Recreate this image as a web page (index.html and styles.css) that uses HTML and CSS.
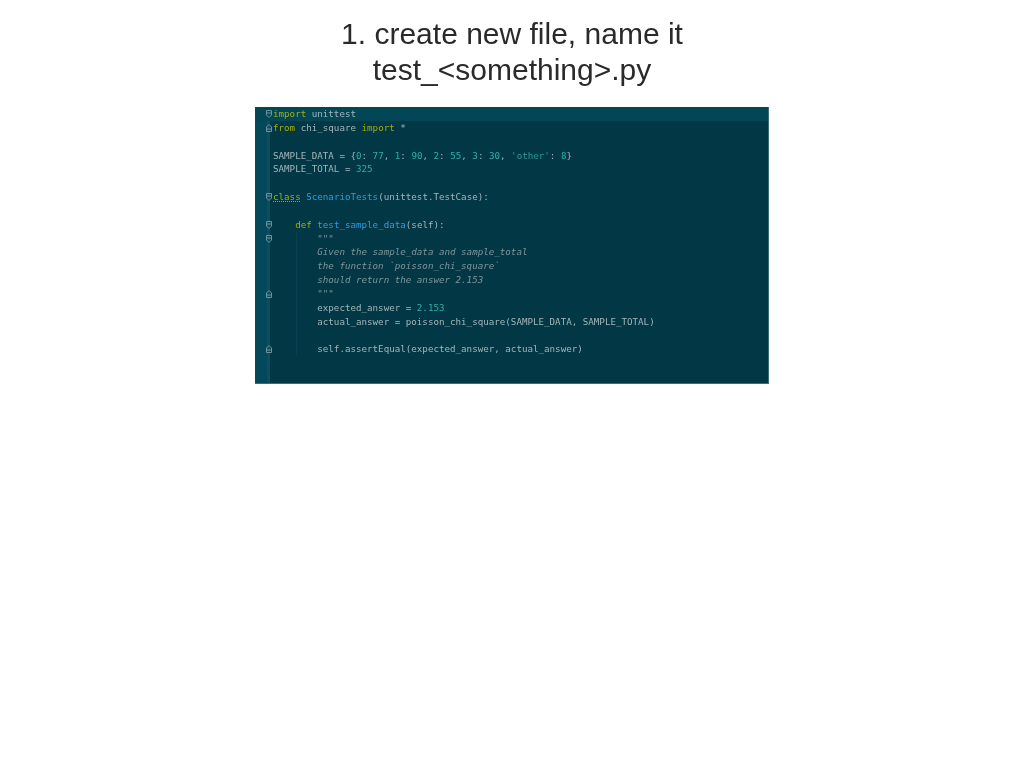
FILE: index.html
```html
<!DOCTYPE html>
<html lang="en">
<head>
<meta charset="utf-8">
<title>create new file</title>
<link rel="stylesheet" href="styles.css">
</head>
<body>
<main class="slide">
  <h1 class="title">1. create new file, name it<br>test_&lt;something&gt;.py</h1>
  <section class="editor">
    <div class="line active"><div class="gutter"><svg class="fold" viewBox="0 0 6 8"><path d="M.5.5h5V5L3 7.500.5 5zM.5 3h5"/></svg></div><code class="code"><span class="kw">import</span> unittest</code></div>
    <div class="line"><div class="gutter"><svg class="fold" viewBox="0 0 6 8"><path d="M.5 7.500h5V3L3 .5.5 3zM.5 5h5"/></svg></div><code class="code"><span class="kw">from</span> chi_square <span class="kw">import</span> *</code></div>
    <div class="line"><div class="gutter"></div><code class="code"></code></div>
    <div class="line"><div class="gutter"></div><code class="code">SAMPLE_DATA = {<span class="num">0</span>: <span class="num">77</span>, <span class="num">1</span>: <span class="num">90</span>, <span class="num">2</span>: <span class="num">55</span>, <span class="num">3</span>: <span class="num">30</span>, <span class="str">'other'</span>: <span class="num">8</span>}</code></div>
    <div class="line"><div class="gutter"></div><code class="code">SAMPLE_TOTAL = <span class="num">325</span></code></div>
    <div class="line"><div class="gutter"></div><code class="code"></code></div>
    <div class="line"><div class="gutter"><svg class="fold" viewBox="0 0 6 8"><path d="M.5.5h5V5L3 7.500.5 5zM.5 3h5"/></svg></div><code class="code"><span class="kw warn">class</span> <span class="name">ScenarioTests</span>(unittest.TestCase):</code></div>
    <div class="line"><div class="gutter"></div><code class="code"></code></div>
    <div class="line"><div class="gutter"><svg class="fold" viewBox="0 0 6 8"><path d="M.5.5h5V5L3 7.500.5 5zM.5 3h5"/></svg></div><code class="code">    <span class="kw">def</span> <span class="name">test_sample_data</span>(self):</code></div>
    <div class="line"><div class="gutter"><svg class="fold" viewBox="0 0 6 8"><path d="M.5.5h5V5L3 7.500.5 5zM.5 3h5"/></svg></div><code class="code">        <span class="doc">"""</span></code></div>
    <div class="line"><div class="gutter"></div><code class="code">        <span class="doc">Given the sample_data and sample_total</span></code></div>
    <div class="line"><div class="gutter"></div><code class="code">        <span class="doc">the function `poisson_chi_square`</span></code></div>
    <div class="line"><div class="gutter"></div><code class="code">        <span class="doc">should return the answer 2.153</span></code></div>
    <div class="line"><div class="gutter"><svg class="fold" viewBox="0 0 6 8"><path d="M.5 7.500h5V3L3 .5.5 3zM.5 5h5"/></svg></div><code class="code">        <span class="doc">"""</span></code></div>
    <div class="line"><div class="gutter"></div><code class="code">        expected_answer = <span class="num">2.153</span></code></div>
    <div class="line"><div class="gutter"></div><code class="code">        actual_answer = poisson_chi_square(SAMPLE_DATA, SAMPLE_TOTAL)</code></div>
    <div class="line"><div class="gutter"></div><code class="code"></code></div>
    <div class="line"><div class="gutter"><svg class="fold" viewBox="0 0 6 8"><path d="M.5 7.500h5V3L3 .5.5 3zM.5 5h5"/></svg></div><code class="code">        self.assertEqual(expected_answer, actual_answer)</code></div>
    <div class="guide"></div>
  </section>
</main>
</body>
</html>
```
FILE: styles.css
```css
html, body {
  margin: 0;
  padding: 0;
  background: #ffffff;
}

.slide {
  display: flex;
  flex-direction: column;
  align-items: center;
  width: 1024px;
  height: 764px;
  overflow: hidden;
}

.title {
  margin: 16px 0 0;
  height: 91px;
  font-family: "Liberation Sans", Arial, sans-serif;
  font-size: 30px;
  font-weight: 400;
  line-height: 36px;
  text-align: center;
  color: #2a2a2a;
  filter: blur(0.2px);
}

.editor {
  position: relative;
  box-sizing: border-box;
  width: 514px;
  height: 277px;
  background: linear-gradient(to right, #04485a 0, #04485a 12px, #07505f 12px, #07505f 15px, #023846 15px);
  border-right: 1px solid #3e6a76;
  border-bottom: 1px solid #3e6a76;
  overflow: hidden;
}

.line {
  display: flex;
  height: 13.85px;
}

.line.active {
  background: #034757;
}

.gutter {
  display: flex;
  justify-content: flex-end;
  align-items: center;
  box-sizing: border-box;
  flex: none;
  width: 18px;
  padding-right: 1px;
}

.fold {
  width: 6px;
  height: 8px;
  fill: none;
  stroke: #6f929c;
  stroke-width: 1;
}

.code {
  font-family: "DejaVu Sans Mono", monospace;
  font-size: 9.2px;
  line-height: 13.85px;
  white-space: pre;
  color: #a3b5b9;
  filter: blur(0.35px);
}

.kw { color: #a2ae0c; }
.num { color: #2fb0a6; }
.str { color: #2f9a92; }
.name { color: #2e9ce4; }
.doc { color: #7f949a; font-style: italic; }
.warn {
  text-decoration: underline dotted #c09400 1px;
  text-underline-offset: 1px;
}

.guide {
  position: absolute;
  top: 125px;
  left: 41px;
  height: 124px;
  width: 1px;
  background: #074050;
}
```
